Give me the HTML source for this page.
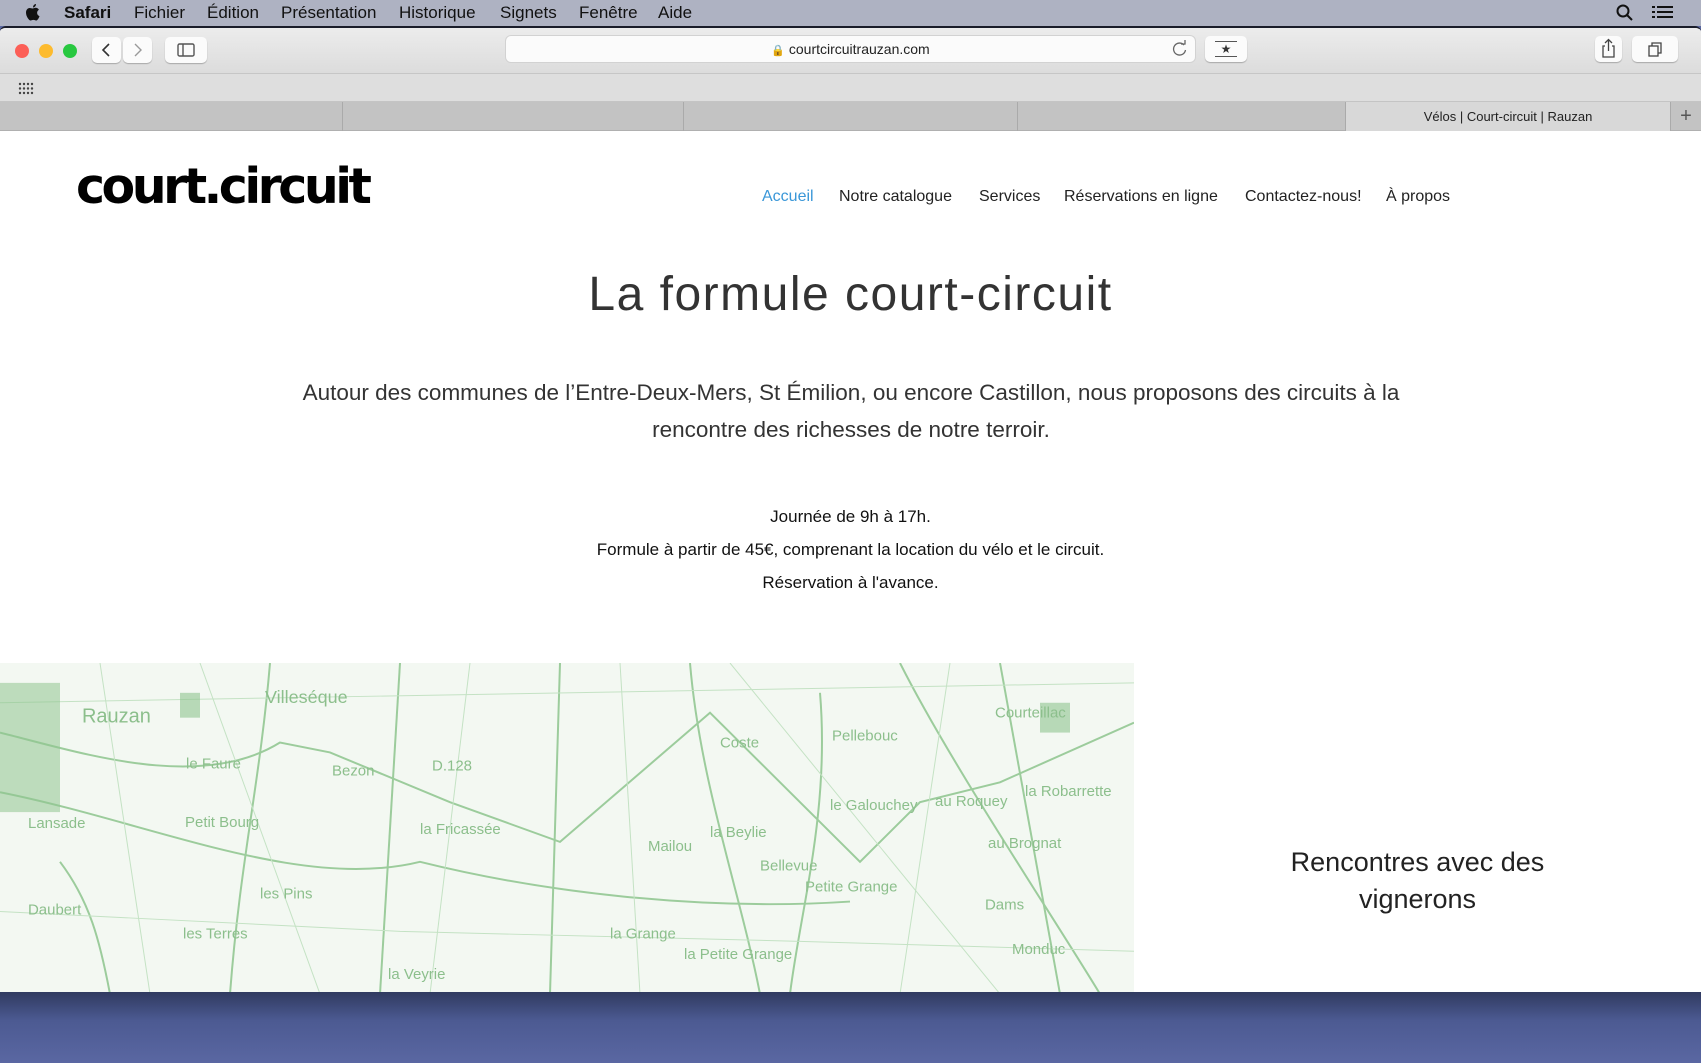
<!DOCTYPE html>
<html><head><meta charset="utf-8"><style>
*{margin:0;padding:0;box-sizing:border-box}
body{width:1701px;height:1063px;overflow:hidden;background:#5a67a0;font-family:"Liberation Sans",sans-serif;position:relative}
.abs{position:absolute}
#menu{left:0;top:0;width:1701px;height:26px;background:#aeb2c2;font-size:17px;color:#111}
#menu span{position:absolute;top:3px}
#win{left:0;top:26px;width:1701px;height:966px;background:#fff;border-top:2px solid #1a1d2a;border-radius:6px 6px 0 0;overflow:hidden}
#tool{left:0;top:0;width:1701px;height:46px;background:linear-gradient(#ececec,#dcdcdc);border-bottom:1px solid #c6c6c6}
#bm{left:0;top:46px;width:1701px;height:28px;background:#dedede;border-bottom:1px solid #c4c4c4}
#tabs{left:0;top:74px;width:1701px;height:29px;background:#c3c3c3;border-bottom:1px solid #b0b0b0}
.btn{position:absolute;background:#fbfbfb;border-radius:5px;box-shadow:0 1px 1px rgba(0,0,0,.25)}
.dot{position:absolute;width:14px;height:14px;border-radius:50%;top:16px}
#page{left:0;top:103px;width:1701px;height:863px;background:#fff}
.nav{position:absolute;top:57px;font-size:16px;color:#222}
.c{position:absolute;left:0;width:1701px;text-align:center;color:#222}
#bottom{left:0;top:992px;width:1701px;height:71px;background:linear-gradient(#303a60,#4c5a92 40%,#5a67a2)}
</style></head><body>
<div id="menu" class="abs">
<svg class="abs" style="left:24px;top:3px" width="17" height="20" viewBox="0 0 17 20"><path d="M12 1c0 2-1.5 3.5-3 3.5C9 2.5 10.5 1 12 1zM8.5 5.5c1 0 2-.7 3-.7 1.5 0 2.7.8 3.4 2-2.7 1.6-2.2 5.4.6 6.4-.6 1.8-2 4.3-3.4 4.3-1 0-1.4-.6-2.7-.6s-1.8.6-2.8.6C5 17.5 2 13.5 2 9.5 2 7 3.6 5 5.7 5c1.1 0 2 .5 2.8.5z" fill="#111"/></svg>
<span style="left:64px;font-weight:bold">Safari</span><span style="left:134px">Fichier</span><span style="left:207px">Édition</span><span style="left:281px">Présentation</span><span style="left:399px">Historique</span><span style="left:500px">Signets</span><span style="left:579px">Fenêtre</span><span style="left:658px">Aide</span>
<svg class="abs" style="left:1616px;top:4px" width="18" height="18"><circle cx="7" cy="7" r="5.5" stroke="#111" stroke-width="2" fill="none"/><path d="M11 11l5 5" stroke="#111" stroke-width="2"/></svg>
<svg class="abs" style="left:1652px;top:5px" width="22" height="16"><g fill="#111"><rect x="0" y="1" width="3" height="2"/><rect x="5" y="1" width="16" height="2"/><rect x="0" y="6" width="3" height="2"/><rect x="5" y="6" width="16" height="2"/><rect x="0" y="11" width="3" height="2"/><rect x="5" y="11" width="16" height="2"/></g></svg>
</div>
<div id="win" class="abs">
<div id="tool" class="abs">
<div class="dot" style="left:15px;background:#fc5f57"></div><div class="dot" style="left:39px;background:#fdbb2e"></div><div class="dot" style="left:63px;background:#28c840"></div>
<div class="btn" style="left:92px;top:9px;width:29px;height:26px"><svg width="29" height="26"><path d="M17 7l-6 6 6 6" stroke="#333" stroke-width="1.6" fill="none"/></svg></div>
<div class="btn" style="left:123px;top:9px;width:29px;height:26px"><svg width="29" height="26"><path d="M12 7l6 6-6 6" stroke="#999" stroke-width="1.4" fill="none"/></svg></div>
<div class="btn" style="left:165px;top:9px;width:42px;height:26px"><svg width="42" height="26"><rect x="13" y="7" width="16" height="12" rx="1.5" stroke="#555" stroke-width="1.4" fill="none"/><path d="M18 7v12" stroke="#555" stroke-width="1.4"/></svg></div>
<div class="btn" style="left:506px;top:8px;width:689px;height:26px;box-shadow:0 0 0 1px #d2d2d2"><div style="position:absolute;left:0;width:100%;top:5px;text-align:center;font-size:14px;color:#222"><span style="font-size:11px;color:#777">🔒</span> courtcircuitrauzan.com</div>
<svg class="abs" style="right:6px;top:4px" width="18" height="18"><path d="M13 5A6 6 0 1 0 14.5 10" stroke="#666" stroke-width="1.3" fill="none"/><path d="M10 4h4V0" stroke="#666" stroke-width="1.3" fill="none"/></svg></div>
<div class="btn" style="left:1205px;top:8px;width:42px;height:26px;text-align:center;font-size:12px;line-height:26px;color:#333"><div style="position:absolute;left:10px;right:10px;top:5px;border-top:1px solid #555"></div>★<div style="position:absolute;left:10px;right:10px;bottom:5px;border-top:1px solid #555"></div></div>
<div class="btn" style="left:1595px;top:8px;width:27px;height:26px"><svg width="27" height="26"><path d="M10 10H8v11h11V10h-2M13.5 15V4M10 7l3.5-3.5L17 7" stroke="#444" stroke-width="1.3" fill="none"/></svg></div>
<div class="btn" style="left:1632px;top:8px;width:46px;height:26px"><svg width="46" height="26"><rect x="17" y="10" width="9" height="10" stroke="#444" stroke-width="1.3" fill="none"/><path d="M20 10V7h9v10h-3" stroke="#444" stroke-width="1.3" fill="none"/></svg></div>
</div>
<div id="bm" class="abs"><svg class="abs" style="left:18px;top:8px" width="18" height="14"><g fill="#444"><circle cx="2" cy="2" r="1.2"/><circle cx="6" cy="2" r="1.2"/><circle cx="10" cy="2" r="1.2"/><circle cx="14" cy="2" r="1.2"/><circle cx="2" cy="6.5" r="1.2"/><circle cx="6" cy="6.5" r="1.2"/><circle cx="10" cy="6.5" r="1.2"/><circle cx="14" cy="6.5" r="1.2"/><circle cx="2" cy="11" r="1.2"/><circle cx="6" cy="11" r="1.2"/><circle cx="10" cy="11" r="1.2"/><circle cx="14" cy="11" r="1.2"/></g></svg></div>
<div id="tabs" class="abs">
<div class="abs" style="left:342px;top:0;height:29px;border-left:1px solid #aaa"></div>
<div class="abs" style="left:683px;top:0;height:29px;border-left:1px solid #aaa"></div>
<div class="abs" style="left:1017px;top:0;height:29px;border-left:1px solid #aaa"></div>
<div class="abs" style="left:1345px;top:0;width:326px;height:29px;background:#d8d8d8;border-left:1px solid #aaa;border-right:1px solid #aaa;text-align:center;font-size:13px;line-height:29px;color:#222">Vélos | Court-circuit | Rauzan</div>
<div class="abs" style="left:1671px;top:0;width:30px;height:29px;text-align:center;font-size:20px;line-height:28px;color:#555">+</div>
</div>
<div id="page" class="abs">
<div class="abs" style="left:76px;top:27px;font-family:'DejaVu Sans',sans-serif;font-weight:bold;font-size:49px;letter-spacing:-3.5px;color:#000">court.circuit</div>
<span class="nav" style="left:762px;color:#3a97d8">Accueil</span>
<span class="nav" style="left:839px">Notre catalogue</span>
<span class="nav" style="left:979px">Services</span>
<span class="nav" style="left:1064px">Réservations en ligne</span>
<span class="nav" style="left:1245px">Contactez-nous!</span>
<span class="nav" style="left:1386px">À propos</span>
<div class="c" style="top:136px;font-size:48px;color:#333;letter-spacing:1.5px">La formule court-circuit</div>
<div class="c" style="top:243px;font-size:22.5px;line-height:37px;left:276px;width:1150px;color:#333">Autour des communes de l’Entre-Deux-Mers, St Émilion, ou encore Castillon, nous proposons des circuits à la rencontre des richesses de notre terroir.</div>
<div class="c" style="top:369px;font-size:17px;line-height:33px;color:#111">Journée de 9h à 17h.<br>Formule à partir de 45€, comprenant la location du vélo et le circuit.<br>Réservation à l'avance.</div>
<svg class="abs" style="left:0;top:532px" width="1134" height="331" viewBox="0 0 1134 333" preserveAspectRatio="none">
<rect width="1134" height="333" fill="#f3f8f2"/>
<g stroke="#9ccc9c" fill="none" stroke-width="2">
<path d="M0 70 C80 90 200 130 280 80 L330 90 450 140 560 180 710 50 860 200 920 140 1000 120 1134 60"/>
<path d="M270 0 C260 120 240 200 230 333"/><path d="M560 0 550 333"/><path d="M690 0 C700 120 740 230 760 333"/>
<path d="M0 130 C150 160 300 230 420 200 540 230 700 250 850 240 1000 260 1134 250"/>
<path d="M60 200 C90 240 100 280 110 333"/><path d="M900 0 C950 100 1050 250 1100 333"/>
<path d="M400 0 380 333"/><path d="M820 30 C830 150 800 250 790 333"/><path d="M1000 0 1060 333"/>
</g>
<g stroke="#c4e2c4" fill="none" stroke-width="1">
<path d="M0 40 1134 20"/><path d="M100 0 150 333"/><path d="M470 0 430 333"/><path d="M620 0 640 333"/><path d="M950 0 900 333"/><path d="M0 250 400 270 800 280 1134 290"/><path d="M200 0 320 333"/><path d="M730 0 1000 333"/>
</g>
<g fill="#8fc48f"><rect x="0" y="20" width="60" height="130" opacity=".55"/><rect x="1040" y="40" width="30" height="30" opacity=".6"/><rect x="180" y="30" width="20" height="25" opacity=".6"/></g>
<g fill="#8cbf8c" font-family="Liberation Sans Narrow,Liberation Sans,sans-serif" font-size="15">
<text x="82" y="60" font-size="20">Rauzan</text><text x="265" y="40" font-size="18">Villeséque</text><text x="186" y="106">le Faure</text><text x="185" y="165">Petit Bourg</text><text x="28" y="166">Lansade</text><text x="332" y="113">Bezon</text><text x="432" y="108">D.128</text><text x="420" y="172">la Fricassée</text><text x="832" y="78">Pellebouc</text><text x="720" y="85">Coste</text><text x="995" y="55">Courteillac</text><text x="830" y="148">le Galouchey</text><text x="935" y="144">au Roquey</text><text x="710" y="175">la Beylie</text><text x="648" y="189">Mailou</text><text x="760" y="209">Bellevue</text><text x="805" y="230">Petite Grange</text><text x="988" y="186">au Brognat</text><text x="260" y="237">les Pins</text><text x="28" y="253">Daubert</text><text x="183" y="277">les Terres</text><text x="610" y="277">la Grange</text><text x="684" y="298">la Petite Grange</text><text x="985" y="248">Dams</text><text x="1012" y="293">Monduc</text><text x="1025" y="134">la Robarrette</text><text x="388" y="318">la Veyrie</text></g>
</svg>
<div class="c" style="left:1134px;width:567px;top:713px;font-size:27px;line-height:37px;color:#222">Rencontres avec des<br>vignerons</div>
</div>
</div>
<div id="bottom" class="abs"></div>
</body></html>
